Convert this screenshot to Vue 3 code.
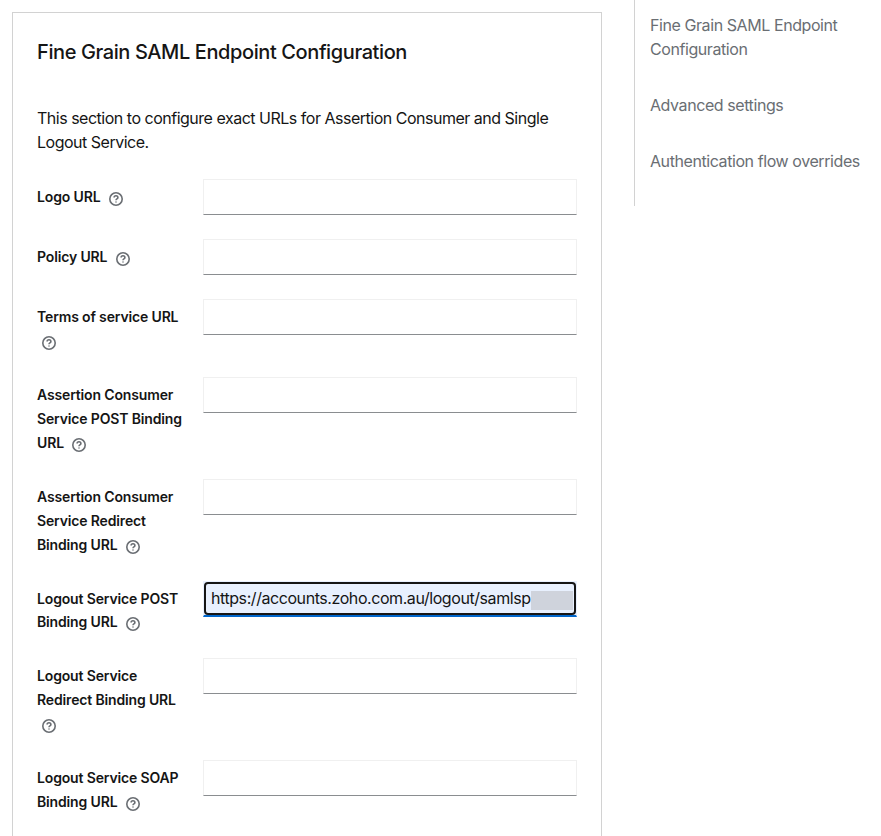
<template>
  <div class="page">
    <div class="main">
      <section class="card">
        <h2 class="card-title">Fine Grain SAML Endpoint Configuration</h2>
        <p class="intro">
          This section to configure exact URLs for Assertion Consumer and Single
          Logout Service.
        </p>
        <form class="fields" @submit.prevent>
          <div v-for="field in fields" :key="field.label" class="row">
            <label class="label">
              {{ field.label }}
              <svg class="help" viewBox="0 0 14 14" aria-hidden="true">
                <circle cx="7" cy="7" r="6.2" />
                <path d="M5.1 5.6c0-1.1.8-1.9 1.9-1.9s1.9.7 1.9 1.7c0 .7-.4 1.1-1 1.5-.6.4-.9.7-.9 1.3" />
                <path d="M7 9.4v1.2" />
              </svg>
            </label>
            <div class="control" :class="{ focused: field.value }">
              <input class="input" type="text" :value="field.value" />
              <span v-if="field.value" class="redacted"></span>
            </div>
          </div>
        </form>
      </section>
    </div>
    <nav class="jump-links">
      <a v-for="link in links" :key="link" class="jump-link">{{ link }}</a>
    </nav>
  </div>
</template>

<script setup>
const fields = [
  { label: 'Logo URL' },
  { label: 'Policy URL' },
  { label: 'Terms of service URL' },
  { label: 'Assertion Consumer Service POST Binding URL' },
  { label: 'Assertion Consumer Service Redirect Binding URL' },
  { label: 'Logout Service POST Binding URL', value: 'https://accounts.zoho.com.au/logout/samlsp' },
  { label: 'Logout Service Redirect Binding URL' },
  { label: 'Logout Service SOAP Binding URL' },
];

const links = [
  'Fine Grain SAML Endpoint Configuration',
  'Advanced settings',
  'Authentication flow overrides',
];
</script>

<style>
html,
body {
  margin: 0;
  height: 836px;
  overflow: hidden;
  background: #fff;
}
</style>

<style scoped>
.page {
  display: flex;
  align-items: flex-start;
  height: 836px;
  overflow: hidden;
  font-family: 'Inter', 'Liberation Sans', sans-serif;
  color: #151515;
}

.main {
  width: 590px;
  margin: 12px 0 0 12px;
  flex: none;
}

.card {
  box-sizing: border-box;
  width: 590px;
  border: 1px solid #d2d2d2;
  padding: 24px;
  background: #fff;
}

.card-title {
  margin: 0;
  font-size: 20px;
  line-height: 30px;
  font-weight: 500;
  letter-spacing: -0.4px;
}

.intro {
  margin: 39px 0 0;
  font-size: 16px;
  line-height: 24px;
  letter-spacing: -0.49px;
}

.fields {
  margin-top: 25px;
  display: flex;
  flex-direction: column;
  gap: 24px;
}

.row {
  display: grid;
  grid-template-columns: 150px 374px;
  column-gap: 16px;
  align-items: start;
}

.label {
  display: block;
  padding-top: 6px;
  font-size: 14px;
  line-height: 23.93px;
  font-weight: 600;
  letter-spacing: -0.15px;
}

.help {
  width: 14px;
  height: 14px;
  margin-left: 5px;
  vertical-align: -4px;
  fill: none;
  stroke: #6a6e73;
  stroke-width: 1.6;
}

.control {
  position: relative;
  height: 36px;
}

.input {
  display: block;
  box-sizing: border-box;
  width: 100%;
  height: 36px;
  padding: 0 8px;
  border: 1px solid #f0f0f0;
  border-bottom-color: #8a8d90;
  border-radius: 0;
  background: #fff;
  font: inherit;
  font-size: 16px;
  letter-spacing: -0.43px;
  color: #151515;
  outline: none;
}

.focused .input {
  padding: 0 7px;
  background: #e8f0fe;
  border-color: #e8f0fe;
  border-bottom: 2px solid #06c;
}

.focused::after {
  content: '';
  position: absolute;
  inset: 1px 1px 2px;
  border: 2px solid #151515;
  border-radius: 4px;
  pointer-events: none;
}

.redacted {
  position: absolute;
  left: 328px;
  top: 10px;
  width: 42px;
  height: 19px;
  background: #cfd3dc;
}

.jump-links {
  box-sizing: border-box;
  width: 246px;
  height: 206px;
  margin-left: 32px;
  padding: 13px 0 0 15px;
  border-left: 1px solid #d2d2d2;
  display: flex;
  flex-direction: column;
  gap: 32px;
}

.jump-link {
  font-size: 16px;
  line-height: 24px;
  letter-spacing: -0.42px;
  color: #6a6e73;
}
</style>
